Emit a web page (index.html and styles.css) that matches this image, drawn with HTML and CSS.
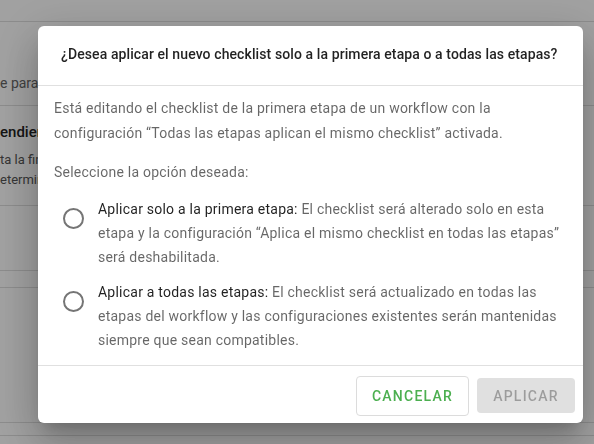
FILE: index.html
```html
<!DOCTYPE html>
<html lang="es">
<head>
<meta charset="utf-8">
<link rel="stylesheet" href="styles.css">
</head>
<body>
<div class="page">
  <div class="row r1"></div>
  <div class="row r2"><span class="muted">e para el</span></div>
  <div class="row r3">
    <div class="strong">endiente</div>
    <div class="small">ta la fin</div>
    <div class="small">etermina</div>
  </div>
  <div class="row r4"></div>
  <div class="row r5"></div>
  <div class="row r6"></div>
  <div class="row r7"></div>
</div>
<div class="overlay">
  <div class="dialog">
    <div class="header">¿Desea aplicar el nuevo checklist solo a la primera etapa o a todas las etapas?</div>
    <div class="body">
      <p class="para">Está editando el checklist de la primera etapa de un workflow con la configuración “Todas las etapas aplican el mismo checklist” activada.</p>
      <p class="para sel">Seleccione la opción deseada:</p>
      <div class="option">
        <span class="radio"></span>
        <p class="opt-text"><span class="label">Aplicar solo a la primera etapa:</span> El checklist será alterado solo en esta etapa y la configuración “Aplica el mismo checklist en todas las etapas” será deshabilitada.</p>
      </div>
      <div class="option second">
        <span class="radio"></span>
        <p class="opt-text"><span class="label">Aplicar a todas las etapas:</span> El checklist será actualizado en todas las etapas del workflow y las configuraciones existentes serán mantenidas siempre que sean compatibles.</p>
      </div>
    </div>
    <div class="footer">
      <button class="btn cancel">Cancelar</button>
      <button class="btn apply" disabled>Aplicar</button>
    </div>
  </div>
</div>
</body>
</html>
```

FILE: styles.css
```css
* { box-sizing: border-box; }
html, body { margin: 0; padding: 0; }
body {
  width: 594px;
  height: 444px;
  overflow: hidden;
  background: #ffffff;
  font-family: Roboto, "Liberation Sans", sans-serif;
}
.page { width: 594px; }
.row { border-bottom: 1px solid #dedede; white-space: nowrap; overflow: hidden; }
.r1 { height: 22px; }
.r2 { height: 84px; padding-top: 51px; }
.r3 { height: 100px; padding-top: 16px; }
.r4 { height: 65px; }
.r5 { height: 17px; }
.r6 { height: 135px; }
.r7 { height: 13px; }
.muted { font-size: 14px; color: #666; line-height: 20px; }
.strong { font-size: 15px; font-weight: 500; color: #222; line-height: 20px; height: 28px; }
.small { font-size: 13px; color: #555; line-height: 20px; }

.overlay {
  position: fixed;
  inset: 0;
  background: rgba(0, 0, 0, 0.37);
  display: flex;
  align-items: flex-start;
  justify-content: flex-start;
  padding: 26px 0 0 38px;
}
.dialog {
  width: 545px;
  background: #fff;
  border-radius: 6px;
  box-shadow: 0 11px 15px -7px rgba(0,0,0,0.2), 0 24px 38px 3px rgba(0,0,0,0.14), 0 9px 46px 8px rgba(0,0,0,0.12);
  overflow: hidden;
}
.header {
  height: 60px;
  padding: 0 16px 3px 23px;
  display: flex;
  align-items: center;
  font-size: 14px;
  font-weight: 500;
  letter-spacing: 0.1px;
  color: rgba(0,0,0,0.87);
  border-bottom: 1px solid #e0e0e0;
}
.body {
  padding: 10px 16px 13px 16px;
  font-size: 14px;
  letter-spacing: 0.23px;
  color: rgba(0,0,0,0.6);
  border-bottom: 1px solid #e0e0e0;
}
.para { margin: 0; line-height: 25px; }
.sel { margin-top: 14px; }
.option { display: flex; gap: 14px; margin-top: 12px; }
.option.second { margin-top: 11px; }
.radio {
  flex: none;
  width: 21px;
  height: 21px;
  margin-top: 11px;
  margin-left: 9px;
  border: 2px solid #757575;
  border-radius: 50%;
}
.opt-text { margin: 0; line-height: 24px; }
.label { color: rgba(0,0,0,0.87); }
.footer {
  height: 57px;
  display: flex;
  justify-content: flex-end;
  align-items: center;
  gap: 8px;
  padding: 2px 8px 0 8px;
}
.btn {
  font-family: Roboto, "Liberation Sans", sans-serif;
  font-size: 14px;
  font-weight: 500;
  letter-spacing: 1.25px;
  text-transform: uppercase;
  border-radius: 4px;
}
.cancel {
  width: 113px;
  height: 40px;
  background: #fff;
  border: 1px solid #dcdcdc;
  color: #4caf50;
}
.apply {
  width: 98px;
  height: 35px;
  background: #e0e0e0;
  border: none;
  color: rgba(0,0,0,0.3);
}
```
